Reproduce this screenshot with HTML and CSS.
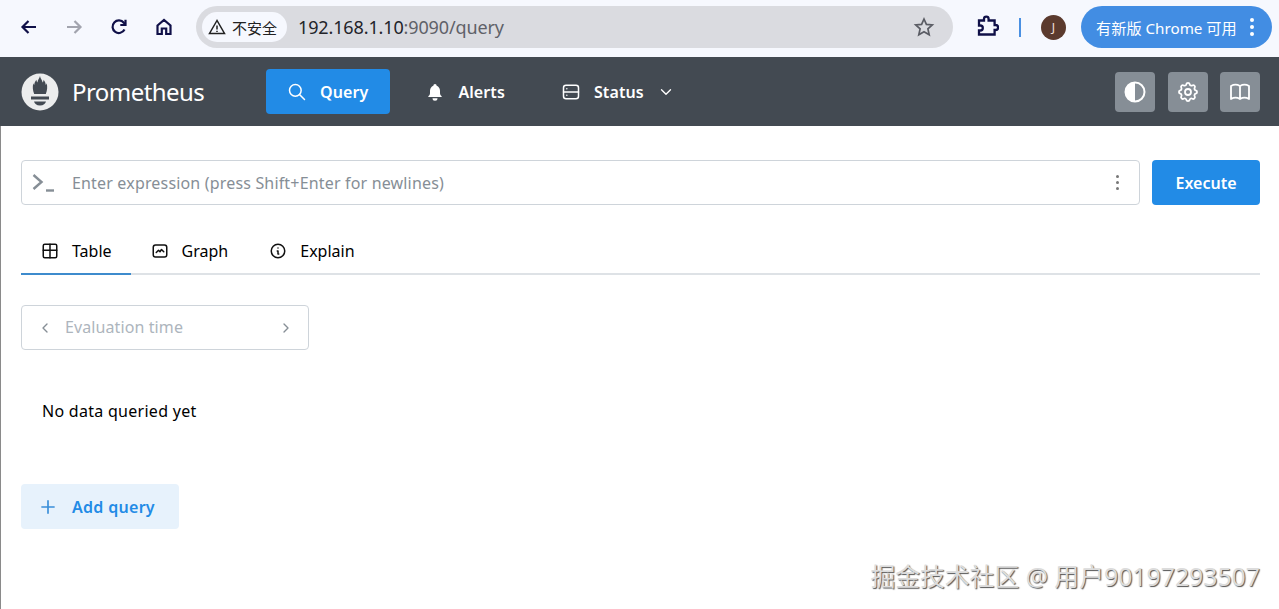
FILE: index.html
```html
<!DOCTYPE html>
<html lang="zh">
<head>
<meta charset="utf-8">
<title>Prometheus</title>
<link rel="stylesheet" href="styles.css">
</head>
<body>
<div class="chrome">
  <button class="tool"><svg width="20" height="20" viewBox="0 0 20 20" class="ink"><path d="M17 10H4M9.500 4 3.500 10l6 6"/></svg></button>
  <button class="tool"><svg width="20" height="20" viewBox="0 0 20 20" class="ink dim"><path d="M3 10h13M10.500 4l6 6-6 6"/></svg></button>
  <button class="tool"><svg width="20" height="20" viewBox="0 0 20 20" class="ink"><path d="M15.500 12.500A6.300 6.300 0 1 1 14.800 5.800L16.500 7.500"/><path d="M16.500 2.800v5.200h-5.200"/></svg></button>
  <button class="tool"><svg width="20" height="20" viewBox="0 0 20 20" class="ink"><path d="M3.500 8.500 10 3l6.500 5.500V17H12.200v-5.500H7.800V17H3.500z"/></svg></button>
  <div class="omnibox">
    <span class="chip"><svg width="18" height="18" viewBox="0 0 18 18" class="warn"><path d="M9 2.500 1.500 15.500h15zM9 7.500v4M9 12.800v1.200"/></svg>不安全</span>
    <span class="url">192.168.1.10<span class="url-dim">:9090/query</span></span>
    <svg class="star" width="22" height="22" viewBox="0 0 22 22"><path d="m11 3 2.400 5.400 5.900.6-4.400 3.900 1.300 5.800L11 15.700l-5.200 3 1.300-5.800L2.700 9l5.900-.6z"/></svg>
  </div>
  <svg class="ext" width="24" height="24" viewBox="0 0 24 24"><path d="M4 7h5V5.500a2.300 2.300 0 0 1 4.600 0V7h6v4.500h1a2.500 2.500 0 0 1 0 5h-1V21H4v-4h1.300a2.500 2.500 0 0 0 0-5H4z" transform="translate(0 -1.500)"/></svg>
  <span class="divider"></span>
  <span class="avatar">J</span>
  <div class="update"><span>有新版 Chrome 可用</span><span class="dots"><i></i><i></i><i></i></span></div>
</div>
<header class="nav">
  <a class="brand">
    <svg class="logo" width="38" height="38" viewBox="0 0 38 38"><circle cx="19" cy="19" r="18.500" fill="#eceded"/><path fill="#434a52" d="M19 3c.5 3 2.200 3.800 2.600 6.500.6-.8 1-1.600 1-2.800 1.600 2 2 3.800 2.200 5.200.4-.4.7-.9.9-1.600.9 3.500.6 7-.9 10.700H13.200c-1.500-3.700-1.800-7.200-.9-10.700.2.700.5 1.200.9 1.600.2-1.400.6-3.200 2.200-5.200 0 1.200.4 2 1 2.800.4-2.700 1.700-3.500 2.600-6.500zM10 23.500h18v3H10zM13 28.500h12c-.6 2-2.500 4-6 4s-5.400-2-6-4z"/></svg>
    <span class="brand-name">Prometheus</span>
  </a>
  <nav class="links">
    <a class="link active"><svg width="20" height="20" viewBox="0 0 24 24" class="line"><circle cx="10" cy="10" r="7"/><path d="m21 21-6-6"/></svg>Query</a>
    <a class="link"><svg width="20" height="20" viewBox="0 0 24 24" class="solid"><path d="M12 2.500a2 2 0 0 1 2 2 7 7 0 0 1 4 6v3a4 4 0 0 0 2 3.500v1H4v-1a4 4 0 0 0 2-3.500v-3a7 7 0 0 1 4-6 2 2 0 0 1 2-2zM9 19.500h6a3 3 0 0 1-6 0z"/></svg>Alerts</a>
    <a class="link status"><svg width="20" height="20" viewBox="0 0 24 24" class="line"><rect x="3" y="4" width="18" height="16" rx="3"/><path d="M3 12h18M7 8h.01M7 16h.01"/></svg>Status<svg class="line" width="18" height="18" viewBox="0 0 24 24"><path d="m6 9 6 6 6-6"/></svg></a>
  </nav>
  <div class="actions">
    <button class="square"><svg width="24" height="24" viewBox="0 0 24 24"><circle cx="12" cy="12" r="9.500" fill="none" stroke="#fff" stroke-width="2"/><path d="M12 2.500a9.500 9.500 0 0 0 0 19z" fill="#fff"/></svg></button>
    <button class="square"><svg width="24" height="24" viewBox="0 0 24 24" class="line"><path d="M10.300 4.300c.4-1.800 3-1.800 3.400 0a1.700 1.700 0 0 0 2.600 1.100c1.500-.9 3.300.8 2.400 2.400a1.700 1.700 0 0 0 1 2.500c1.800.4 1.800 3 0 3.400a1.700 1.700 0 0 0-1 2.600c.9 1.500-.9 3.300-2.400 2.400a1.700 1.700 0 0 0-2.600 1c-.4 1.800-3 1.800-3.400 0a1.700 1.700 0 0 0-2.600-1c-1.500.9-3.300-.9-2.400-2.400a1.700 1.700 0 0 0-1-2.600c-1.800-.4-1.800-3 0-3.400a1.700 1.700 0 0 0 1-2.500c-.9-1.600.9-3.300 2.400-2.400 1 .6 2.300.1 2.600-1.100z"/><circle cx="12" cy="12" r="3"/></svg></button>
    <button class="square"><svg width="24" height="24" viewBox="0 0 24 24" class="line"><path d="M12 19a9 9 0 0 0-9 0V6a9 9 0 0 1 9 0 9 9 0 0 1 9 0v13a9 9 0 0 0-9 0zM12 6v13"/></svg></button>
  </div>
</header>
<main class="page">
  <div class="query-row">
    <div class="expr">
      <svg class="prompt" width="24" height="24" viewBox="0 0 24 24"><path d="m1.500 4 8 7-8 7"/><path d="M14 19.500h8"/></svg>
      <span class="placeholder">Enter expression (press Shift+Enter for newlines)</span>
      <span class="kebab"><i></i><i></i><i></i></span>
    </div>
    <button class="execute">Execute</button>
  </div>
  <div class="tabs">
    <a class="tab current"><svg width="18" height="18" viewBox="0 0 24 24" class="dark"><rect x="3" y="3" width="18" height="18" rx="2"/><path d="M3 11h18M12 3v18"/></svg>Table</a>
    <a class="tab"><svg width="18" height="18" viewBox="0 0 24 24" class="dark"><rect x="3" y="4" width="18" height="16" rx="3"/><path d="m7 14 3-3 2 2 2-3 3 3"/></svg>Graph</a>
    <a class="tab"><svg width="18" height="18" viewBox="0 0 24 24" class="dark"><circle cx="12" cy="12" r="9"/><path d="M12 8h.01M11 12h1v4h1"/></svg>Explain</a>
  </div>
  <div class="evaluation">
    <svg width="16" height="16" viewBox="0 0 24 24" class="gray"><path d="m15 6-6 6 6 6"/></svg>
    <span class="eval-text">Evaluation time</span>
    <svg width="16" height="16" viewBox="0 0 24 24" class="gray"><path d="m9 6 6 6-6 6"/></svg>
  </div>
  <p class="empty">No data queried yet</p>
  <button class="add"><svg width="20" height="20" viewBox="0 0 24 24" class="blue"><path d="M12 4v16M4 12h16"/></svg>Add query</button>
</main>
<div class="watermark">掘金技术社区 @ 用户90197293507</div>
</body>
</html>
```
FILE: styles.css
```css
* { box-sizing: border-box; }
html, body { margin: 0; height: 100%; overflow: hidden; }
body {
  background: #fff;
  color: #000;
  font-family: "Noto Sans", "Noto Sans CJK SC", sans-serif;
  font-size: 16px;
  position: relative;
  display: flex;
  flex-direction: column;
}
button { border: 0; padding: 0; font: inherit; cursor: pointer; }
i { display: block; }

.chrome {
  height: 57px;
  flex: none;
  background: #f6f8fe;
  display: flex;
  align-items: center;
  padding: 0 7px 0 6px;
}
.tool { width: 45px; height: 36px; background: none; display: flex; align-items: center; justify-content: center; flex: none; margin-top: -3px; }
.ink { fill: none; stroke: #101048; stroke-width: 2.200; }
.dim { stroke: #a2a4ae; }
.omnibox {
  margin-left: 10px;
  width: 757px;
  height: 42px;
  margin-top: -3px;
  border-radius: 21px;
  background: #dadbe0;
  display: flex;
  align-items: center;
  padding: 0 18px 0 6px;
  flex: none;
}
.chip {
  height: 30px;
  width: 85px;
  border-radius: 15px;
  background: #f6f8fe;
  display: flex;
  align-items: center;
  gap: 6px;
  padding-left: 6px;
  font-size: 15px;
  color: #222;
  flex: none;
}
.warn { fill: none; stroke: #222; stroke-width: 1.500; flex: none; }
.url { margin-left: 11px; font-size: 18px; letter-spacing: -.13px; color: #23242a; flex: 1; }
.url-dim { color: #5f6168; }
.star { fill: none; stroke: #5a5c64; stroke-width: 1.700; }
.ext { margin-left: 22px; margin-top: -3px; fill: none; stroke: #101048; stroke-width: 2.300; flex: none; }
.divider { margin-left: 20px; width: 2px; height: 19px; margin-top: -3px; background: #4a90e2; flex: none; }
.avatar {
  margin-left: 20px;
  width: 25px;
  height: 25px;
  margin-top: -2px;
  border-radius: 50%;
  background: #5b3a2e;
  color: #f3e2dc;
  font-size: 12px;
  display: flex;
  align-items: center;
  justify-content: center;
  flex: none;
}
.update {
  margin-left: 15px;
  width: 191px;
  height: 42px;
  margin-top: -4px;
  border-radius: 21px;
  background: #428de3;
  color: #fff;
  font-size: 15.200px;
  display: flex;
  align-items: center;
  padding: 0 18px 0 15px;
  justify-content: space-between;
  flex: none;
}
.dots { display: flex; flex-direction: column; gap: 3px; }
.dots i { width: 4px; height: 4px; border-radius: 50%; background: #fff; }

.nav {
  height: 69px;
  flex: none;
  background: #434a52;
  display: flex;
  align-items: center;
  padding: 0 19px 0 21px;
}
.brand { display: flex; align-items: center; gap: 13px; width: 245px; flex: none; }
.brand-name { color: #fff; font-size: 24px; letter-spacing: -.55px; }
.links { display: flex; align-items: center; gap: 15px; flex: 1; }
.link {
  height: 45px;
  display: flex;
  align-items: center;
  gap: 13px;
  padding: 0 21px;
  color: #fff;
  font-weight: 600;
  font-size: 16px;
  letter-spacing: .1px;
  border-radius: 4px;
}
.link.active { background: #228be6; padding-right: 22px; margin-right: -1px; }
.link.status { margin-left: -1px; }
.line { fill: none; stroke: #fff; stroke-width: 1.800; stroke-linecap: round; stroke-linejoin: round; }
.solid { fill: #fff; }
.actions { display: flex; gap: 12px; margin-top: 1px; }
.square { width: 40px; height: 40px; border-radius: 4px; background: #868e96; display: flex; align-items: center; justify-content: center; }
.square:nth-child(2) { margin-left: 1px; }

.page { flex: 1; padding: 34px 19px 0 20px; border-left: 1px solid #8a8a8a; }
.query-row { display: flex; gap: 12px; }
.expr {
  flex: 1;
  height: 45px;
  border: 1px solid #ced4da;
  border-radius: 4px;
  display: flex;
  align-items: center;
  padding: 0 20px 0 10px;
}
.prompt { fill: none; stroke: #868e96; stroke-width: 2.400; flex: none; }
.placeholder { margin-left: 16px; margin-top: 1px; color: #868e96; flex: 1; letter-spacing: .17px; }
.kebab { display: flex; flex-direction: column; gap: 3px; }
.kebab i { width: 3px; height: 3px; border-radius: 50%; background: #777; }
.execute {
  width: 108px;
  height: 45px;
  border-radius: 4px;
  background: #228be6;
  color: #fff;
  font-weight: 600;
}
.tabs {
  margin-top: 23px;
  height: 47px;
  display: flex;
  border-bottom: 2px solid #dee2e6;
}
.tab {
  height: 47px;
  display: flex;
  align-items: center;
  gap: 13px;
  padding: 0 19px 0 20px;
  border-bottom: 2px solid transparent;
}
.tab + .tab { padding-right: 21px; }
.tab.current { border-bottom-color: #3d8bcd; }
.dark { fill: none; stroke: #111; stroke-width: 2; stroke-linecap: round; stroke-linejoin: round; }
.evaluation {
  margin-top: 30px;
  width: 288px;
  height: 45px;
  border: 1px solid #ced4da;
  border-radius: 4px;
  display: flex;
  align-items: center;
  padding: 0 14px 0 15px;
}
.gray { fill: none; stroke: #868e96; stroke-width: 2; stroke-linecap: round; stroke-linejoin: round; flex: none; }
.eval-text { margin-left: 12px; flex: 1; color: #adb5bd; letter-spacing: .1px; line-height: 22px; margin-top: -2px; }
.empty { margin: 49px 0 0 21px; letter-spacing: .28px; line-height: 24px; }
.add {
  margin-top: 61px;
  width: 158px;
  height: 45px;
  border-radius: 4px;
  background: #e7f2fc;
  color: #228be6;
  font-weight: 600;
  letter-spacing: .3px;
  display: flex;
  align-items: center;
  padding-left: 17px;
  gap: 14px;
}
.blue { fill: none; stroke: #3a8fd9; stroke-width: 2; flex: none; }
.watermark {
  position: absolute;
  right: 19px;
  bottom: 18px;
  font-size: 24.800px;
  line-height: 30px;
  color: #dcdcdc;
  white-space: nowrap;
  text-shadow: 1px 1px 1px #555, -1px -1px 0 #fff;
}
```
